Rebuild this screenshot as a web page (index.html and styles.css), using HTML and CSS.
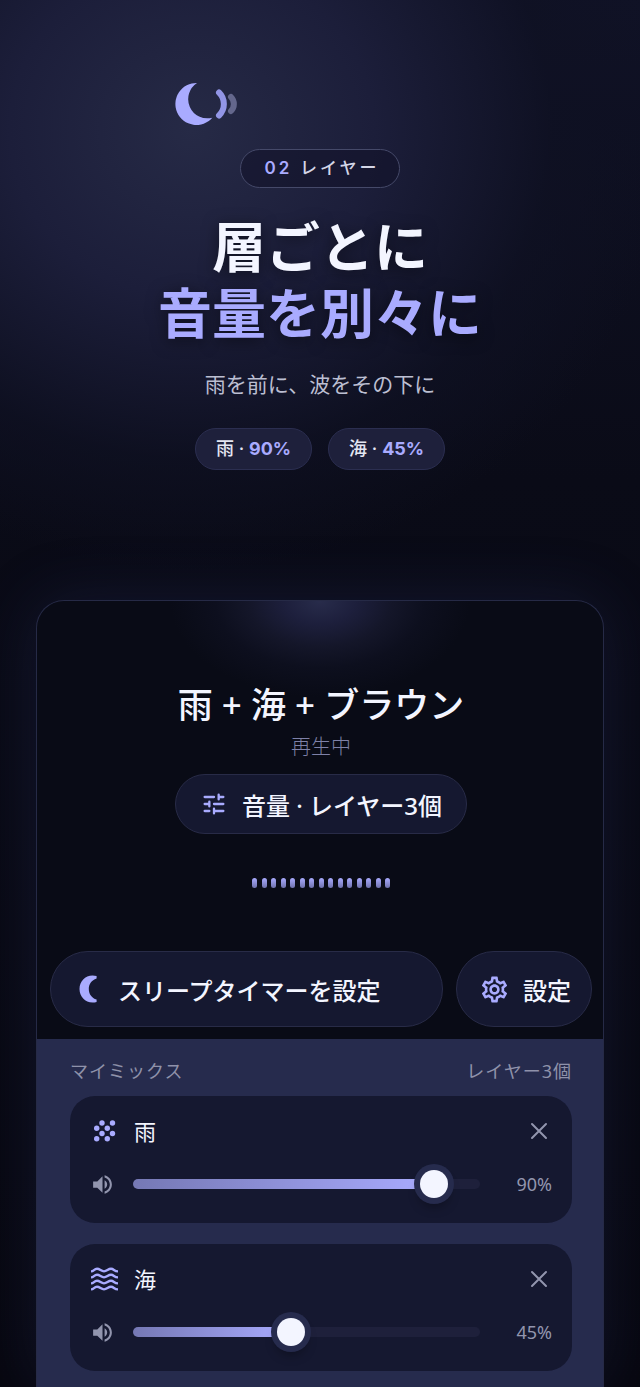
FILE: index.html
```html
<!DOCTYPE html>
<html lang="ja">
<head>
  <meta charset="UTF-8" />
  <meta name="viewport" content="width=device-width, initial-scale=1.0" />
  <title>層ごとに音量を別々に</title>
  <link rel="stylesheet" href="styles.css">
</head>
<body>
  <header class="hero">
    <div class="brand">
      <svg class="logo" viewBox="0 0 64 48" aria-hidden="true">
        <path class="logo-moon" d="M23 3A21 21 0 1 0 38.3 37.7A19.2 19.2 0 0 1 23 3z" />
        <path class="logo-wave" d="M45 12.5A16 16 0 0 1 45 35.5" />
        <path class="logo-wave far" d="M57 17A10 10 0 0 1 57 31" />
      </svg>
    </div>
    <p class="badge"><b>02</b> レイヤー</p>
    <h1>層ごとに<br /><span>音量を別々に</span></h1>
    <p class="lead">雨を前に、波をその下に</p>
    <div class="chips">
      <span class="chip">雨 · <b>90%</b></span>
      <span class="chip">海 · <b>45%</b></span>
    </div>
  </header>

  <main class="phone">
    <section class="player">
      <h2>雨 + 海 + ブラウン</h2>
      <p class="status">再生中</p>
      <button class="pill volume" type="button">
        <svg viewBox="0 0 24 24" aria-hidden="true">
          <path class="line" d="M4 6h8M16 6h4M16 4v4M4 12h4M8 10v4M12 12h8M4 18h4M12 18h8M12 16v4" />
        </svg>
        音量 · レイヤー3個
      </button>
      <div class="bars">
        <i></i><i></i><i></i><i></i><i></i><i></i><i></i><i></i><i></i><i></i><i></i><i></i><i></i><i></i><i></i>
      </div>
      <div class="actions">
        <button class="pill timer" type="button">
          <svg viewBox="0 0 28 28" aria-hidden="true">
            <path d="M18.6 1Q16.6.5 14.6.5C7 .5 1.5 6.5 1.5 14S7 27.5 14.6 27.5Q16.6 27.5 18.6 27V24.6C13.600 23 10.800 19 10.800 14S13.600 5 18.600 3.400z" />
          </svg>
          スリープタイマーを設定
        </button>
        <button class="pill settings" type="button">
          <svg viewBox="0 0 24 24" aria-hidden="true">
            <path d="M19.43 12.98c.04-.32.07-.64.07-.98 0-.34-.03-.66-.07-.98l2.11-1.65c.19-.15.24-.42.12-.64l-2-3.46c-.09-.16-.26-.25-.44-.25-.06 0-.12.01-.17.03l-2.49 1c-.52-.4-1.08-.73-1.69-.98l-.38-2.65C14.46 2.18 14.25 2 14 2h-4c-.25 0-.46.18-.49.42l-.38 2.65c-.61.25-1.17.59-1.69.98l-2.49-1c-.06-.02-.12-.03-.18-.03-.17 0-.34.09-.43.25l-2 3.46c-.13.22-.07.49.12.64l2.11 1.65c-.04.32-.07.65-.07.98 0 .33.03.66.07.98l-2.11 1.65c-.19.15-.24.42-.12.64l2 3.46c.09.16.26.25.44.25.06 0 .12-.01.17-.03l2.49-1c.52.4 1.08.73 1.69.98l.38 2.65c.03.24.24.42.49.42h4c.25 0 .46-.18.49-.42l.38-2.65c.61-.25 1.17-.59 1.69-.98l2.49 1c.06.02.12.03.18.03.17 0 .34-.09.43-.25l2-3.46c.12-.22.07-.49-.12-.64l-2.11-1.65zm-1.98-1.71c.04.31.05.52.05.73 0 .21-.02.43-.05.73l-.14 1.13.89.7 1.08.84-.7 1.21-1.27-.51-1.04-.42-.9.68c-.43.32-.84.56-1.25.73l-1.06.43-.16 1.13-.2 1.35h-1.4l-.19-1.35-.16-1.13-1.06-.43c-.43-.18-.83-.41-1.23-.71l-.91-.7-1.06.43-1.27.51-.7-1.21 1.08-.84.89-.7-.14-1.13c-.03-.31-.05-.54-.05-.74s.02-.43.05-.73l.14-1.13-.89-.7-1.08-.84.7-1.21 1.27.51 1.04.42.9-.68c.43-.32.84-.56 1.25-.73l1.06-.43.16-1.13.2-1.35h1.39l.19 1.35.16 1.13 1.06.43c.43.18.83.41 1.23.71l.91.7 1.06-.43 1.27-.51.7 1.21-1.07.85-.89.7.14 1.13zM12 8c-2.21 0-4 1.79-4 4s1.79 4 4 4 4-1.79 4-4-1.79-4-4-4zm0 6c-1.1 0-2-.9-2-2s.9-2 2-2 2 .9 2 2-.9 2-2 2z" />
          </svg>
          設定
        </button>
      </div>
    </section>

    <section class="mix">
      <div class="mix-head">
        <h3>マイミックス</h3>
        <span>レイヤー3個</span>
      </div>

      <article class="layer">
        <div class="layer-top">
          <svg class="kind" viewBox="0 0 28 28" aria-hidden="true">
            <circle cx="12" cy="6" r="2.7" /><circle cx="22.5" cy="6" r="2.7" />
            <circle cx="6.7" cy="11.2" r="2.7" /><circle cx="17.3" cy="11.2" r="2.7" />
            <circle cx="12" cy="16.5" r="2.7" /><circle cx="22.5" cy="16.5" r="2.7" />
            <circle cx="6.7" cy="21.8" r="2.7" /><circle cx="17.3" cy="21.8" r="2.7" />
          </svg>
          <label for="rain">雨</label>
          <button class="close" type="button" aria-label="雨を削除">
            <svg viewBox="0 0 18 18" aria-hidden="true"><path d="M2 2l14 14M16 2L2 16" /></svg>
          </button>
        </div>
        <div class="layer-volume">
          <svg class="speaker" viewBox="0 0 24 24" aria-hidden="true">
            <path d="M3 9v6h4l5 5V4L7 9H3zm13.5 3c0-1.77-1.02-3.29-2.5-4.03v8.05c1.48-.73 2.5-2.25 2.5-4.02zM14 3.23v2.06c2.89.86 5 3.54 5 6.71s-2.11 5.85-5 6.71v2.06c4.01-.91 7-4.49 7-8.77s-2.99-7.86-7-8.77z" />
          </svg>
          <input type="range" id="rain" min="0" max="100" value="90" style="--value: 0.9" />
          <output for="rain">90%</output>
        </div>
      </article>

      <article class="layer">
        <div class="layer-top">
          <svg class="kind waves" viewBox="0 0 28 28" aria-hidden="true">
            <path d="M1 6.4C4 6.4 4 3.8 7 3.8S11 6.4 14 6.4S18 3.8 21 3.8S24 6.4 28 6.4M1 12.4C4 12.4 4 9.8 7 9.8S11 12.4 14 12.4S18 9.8 21 9.8S24 12.4 28 12.4M1 18.4C4 18.4 4 15.8 7 15.8S11 18.4 14 18.4S18 15.8 21 15.8S24 18.4 28 18.4M1 24.4C4 24.4 4 21.8 7 21.8S11 24.4 14 24.4S18 21.8 21 21.8S24 24.4 28 24.4" />
          </svg>
          <label for="sea">海</label>
          <button class="close" type="button" aria-label="海を削除">
            <svg viewBox="0 0 18 18" aria-hidden="true"><path d="M2 2l14 14M16 2L2 16" /></svg>
          </button>
        </div>
        <div class="layer-volume">
          <svg class="speaker" viewBox="0 0 24 24" aria-hidden="true">
            <path d="M3 9v6h4l5 5V4L7 9H3zm13.5 3c0-1.77-1.02-3.29-2.5-4.03v8.05c1.48-.73 2.5-2.25 2.5-4.02zM14 3.23v2.06c2.89.86 5 3.54 5 6.71s-2.11 5.85-5 6.71v2.06c4.01-.91 7-4.49 7-8.77s-2.99-7.86-7-8.77z" />
          </svg>
          <input type="range" id="sea" min="0" max="100" value="45" style="--value: 0.45" />
          <output for="sea">45%</output>
        </div>
      </article>
    </section>
  </main>

  <script>
    document.querySelectorAll('.layer').forEach((layer) => {
      const range = layer.querySelector('input');
      range.addEventListener('input', () => {
        range.style.setProperty('--value', range.value / 100);
        layer.querySelector('output').textContent = `${range.value}%`;
      });
      layer.querySelector('.close').addEventListener('click', () => layer.remove());
    });
  </script>
</body>
</html>
```

FILE: styles.css
```css
:root {
  --accent: #a9abff;
  --text: #f3f5ff;
  --muted: #9295ae;
  --surface: #151830;
  --line: #262a46;
}
* {
  box-sizing: border-box;
}
body {
  margin: 0;
  color: var(--text);
  font-family: 'Noto Sans', 'Noto Sans CJK JP', sans-serif;
  background:
    radial-gradient(ellipse 480px 440px at 30% 130px, #262a46 0%, #1c1e3a 38%, rgba(15, 17, 35, 0.7) 75%, rgba(10, 11, 22, 0) 100%),
    linear-gradient(#101226 0, #0a0b17 480px, #07070f 100%);
  overflow-x: hidden;
}
h1, h2, h3, p {
  margin: 0;
}
button {
  font: inherit;
  color: inherit;
  cursor: pointer;
}

.hero {
  display: flex;
  flex-direction: column;
  align-items: center;
  padding: 80px 24px 130px;
  font-family: Inter, 'Noto Sans CJK JP', sans-serif;
}
.brand {
  width: 292px;
  height: 69px;
}
.logo {
  display: block;
  width: 64px;
  height: 48px;
}
.logo-moon {
  fill: var(--accent);
}
.logo-wave {
  fill: none;
  stroke: #9295e6;
  stroke-width: 6;
  stroke-linecap: round;
}
.logo-wave.far {
  stroke: #64678c;
}
.badge {
  height: 39px;
  padding: 0 20px 0 24px;
  border: 1px solid #454969;
  border-radius: 20px;
  background: rgba(18, 19, 42, 0.6);
  color: #d3d5e6;
  font-size: 17px;
  font-weight: 500;
  line-height: 37px;
  letter-spacing: 3px;
}
.badge b {
  color: var(--accent);
  font-weight: 600;
}
h1 {
  margin-top: 28px;
  font-size: 54px;
  font-weight: 700;
  line-height: 66px;
  text-align: center;
  text-shadow: 0 3px 16px rgba(0, 0, 0, 0.5);
}
h1 span {
  color: var(--accent);
}
.lead {
  margin-top: 20px;
  color: #bcbfd2;
  font-size: 21px;
  line-height: 34px;
}
.chips {
  display: flex;
  gap: 16px;
  margin-top: 26px;
}
.chip {
  padding: 0 20px;
  border: 1px solid #2b2e50;
  border-radius: 21px;
  background: #1e203b;
  color: #e4e6f2;
  font-size: 18px;
  font-weight: 500;
  line-height: 40px;
}
.chip b {
  color: var(--accent);
}

.phone {
  margin: 0 36px;
  border: 1px solid var(--line);
  border-bottom: 0;
  border-radius: 28px 28px 0 0;
  background: #090b16;
  box-shadow: 0 0 64px rgba(52, 62, 128, 0.24);
  overflow: hidden;
}
.player {
  display: flex;
  flex-direction: column;
  align-items: center;
  padding: 78px 11px 12px 13px;
  background: radial-gradient(ellipse 150px 96px at 50% 0, #282c4b 0%, #1d1f3c 24%, #141629 48%, #0d0f1e 70%, rgba(9, 11, 22, 0) 100%);
}
h2 {
  font-size: 35px;
  font-weight: 500;
  line-height: 52px;
}
.status {
  margin-top: 2px;
  color: #7e81a8;
  font-size: 20px;
  font-weight: 300;
  line-height: 28px;
}
.pill {
  display: flex;
  align-items: center;
  border: 1px solid #282b47;
  border-radius: 38px;
  background: var(--surface);
  font-size: 24px;
  font-weight: 500;
  white-space: nowrap;
}
.pill svg {
  flex: none;
  fill: var(--accent);
}
.volume {
  gap: 14px;
  height: 60px;
  margin-top: 13px;
  padding: 0 24px;
}
.volume svg {
  width: 28px;
  height: 28px;
}
.pill .line {
  fill: none;
  stroke: var(--accent);
  stroke-width: 2;
  stroke-linecap: round;
}
.bars {
  display: flex;
  justify-content: space-between;
  width: 138px;
  margin: 44px 0 63px;
}
.bars i {
  width: 5px;
  height: 10px;
  border-radius: 3px;
  background: linear-gradient(#a9abff, #6f72ad);
}
.actions {
  display: flex;
  gap: 13px;
  width: 100%;
}
.actions .pill {
  height: 76px;
}
.timer {
  flex: 1;
  gap: 12px;
  padding: 0 27px;
}
.timer svg {
  width: 28px;
  height: 28px;
}
.settings {
  gap: 13px;
  padding: 0 20px 0 22px;
}
.settings svg {
  width: 31px;
  height: 31px;
}

.mix {
  display: flex;
  flex-direction: column;
  gap: 21px;
  padding: 18px 31px 16px 33px;
  background: #262b4d;
}
.mix-head {
  display: flex;
  justify-content: space-between;
  color: #8f92aa;
  font-size: 18px;
  line-height: 28px;
  letter-spacing: 1px;
  margin-bottom: -10px;
}
.mix-head h3 {
  font-size: 18px;
  font-weight: 400;
}
.layer {
  height: 127px;
  padding: 20px;
  border-radius: 25px;
  background: var(--surface);
}
.layer-top,
.layer-volume {
  display: flex;
  align-items: center;
}
.layer-top {
  gap: 16px;
  height: 30px;
}
.kind {
  width: 28px;
  height: 28px;
  fill: var(--accent);
}
.kind.waves {
  fill: none;
  stroke: var(--accent);
  stroke-width: 2.4;
}
.layer label {
  flex: 1;
  font-size: 22px;
  line-height: 30px;
}
.close {
  display: flex;
  padding: 4px;
  border: 0;
  background: none;
}
.close svg {
  width: 18px;
  height: 18px;
  stroke: var(--muted);
  stroke-width: 2;
  stroke-linecap: round;
}
.layer-volume {
  height: 28px;
  margin-top: 24px;
}
.speaker {
  flex: none;
  width: 25px;
  height: 25px;
  margin-right: 18px;
  fill: var(--muted);
}
.layer output {
  width: 72px;
  color: var(--muted);
  font-size: 18px;
  text-align: right;
}

input[type="range"] {
  --fill: calc(14px + (100% - 28px) * var(--value));
  -webkit-appearance: none;
  appearance: none;
  flex: 1;
  min-width: 0;
  height: 28px;
  margin: 0;
  background: none;
}
input[type="range"]::-webkit-slider-runnable-track {
  height: 10px;
  border-radius: 5px;
  background:
    linear-gradient(90deg, #7578b4, #a9abff) 0 0 / var(--fill) 100% no-repeat,
    #1e203b;
}
input[type="range"]::-webkit-slider-thumb {
  -webkit-appearance: none;
  width: 28px;
  height: 28px;
  margin-top: -9px;
  border-radius: 50%;
  background: var(--text);
  box-shadow: 0 0 0 6px #262b4d, 0 8px 12px rgba(0, 0, 0, 0.4);
}
```
